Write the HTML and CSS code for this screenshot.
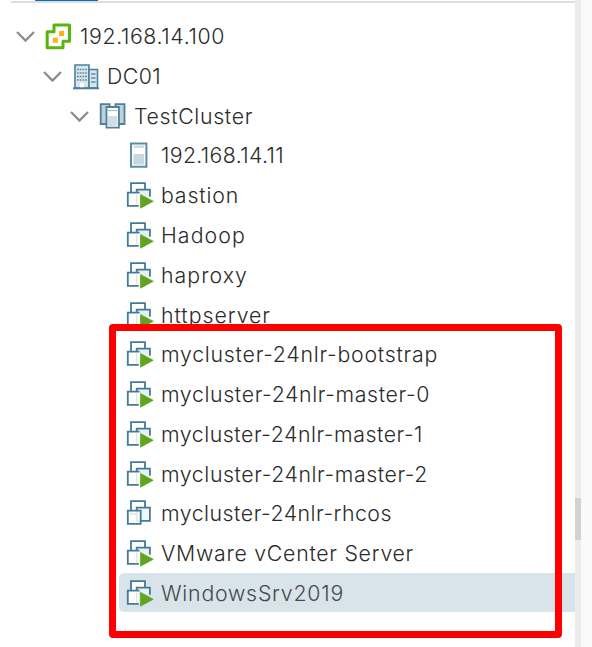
FILE: index.html
```html
<!DOCTYPE html>
<html lang="en">
<head>
<meta charset="utf-8">
<title>Inventory</title>
<link rel="stylesheet" href="styles.css">
</head>
<body>
<svg class="defs" aria-hidden="true">
  <symbol id="chevron" viewBox="0 0 20 28"><path d="M2 10 10.5 18.5 19 10" fill="none" stroke="#8d8d8d" stroke-width="2.3"/></symbol>
  <symbol id="vcenter" viewBox="0 0 28 28">
    <path d="M9 3H24.5V19.2H18V25.8H2.2V9.7H9Z" fill="#fff" stroke="#59b50d" stroke-width="3" stroke-linejoin="round"/>
    <path d="M14 9h5v5h-5zM7.8 15.7h5v5h-5z" fill="#ffb312"/>
  </symbol>
  <symbol id="datacenter" viewBox="0 0 28 28">
    <path d="M3 3h14v23H3z" fill="#d9e5ec" stroke="#4e8199" stroke-width="1.6"/>
    <path d="M17 7.5h8.5V26H17z" fill="#d9e5ec" stroke="#4e8199" stroke-width="1.6"/>
    <path d="M5 7.5h10M5 11h10M5 14.5h10M5 18h10" stroke="#608fa5" stroke-width="1.4" stroke-dasharray="1.8 .9"/>
    <path d="M19 12h4.5M19 16h4.5M19 20h4.5" stroke="#608fa5" stroke-width="1.5"/>
    <path d="M8 21h4v5H8z" fill="#fff"/>
    <path d="M1 26.3h26" stroke="#4e8199" stroke-width="2"/>
  </symbol>
  <symbol id="cluster" viewBox="0 0 28 28">
    <path d="M1.7 2.2h9V22h-9zM16.5 2.2h9V22h-9z" fill="#bfd1da" stroke="#4e8199" stroke-width="1.8"/>
    <path d="M7.5 5h12.4v20.7H7.5z" fill="#fff" stroke="#4e8199" stroke-width="1.8"/>
    <path d="M9 8.5h9.4" stroke="#a9c3d0" stroke-width="1.4"/>
    <path d="M9 14h9.4v10.3H9z" fill="#d0dfe6"/>
  </symbol>
  <symbol id="host" viewBox="0 0 28 28">
    <path d="M5 2.4h15.4v23.3H5z" fill="#fff" stroke="#5d8da3" stroke-width="2"/>
    <path d="M7.4 4.6h10.7v2.2H7.4zM7.4 12.9h10.7v10.6H7.4z" fill="#c6d8e0"/>
  </symbol>
  <symbol id="boxes" viewBox="0 0 28 28">
    <path d="M5 2.2h14v13H5z" fill="#fff" stroke="#427b96" stroke-width="1.8"/>
    <path d="M10.7 8.7h13.2v13.2H10.7z" fill="#f1f6f8" stroke="#427b96" stroke-width="1.8"/>
    <path d="M1.8 11.6h12.9v13.2H1.8z" fill="#fff" fill-opacity=".85" stroke="#427b96" stroke-width="1.8"/>
  </symbol>
  <symbol id="running" viewBox="0 0 28 28">
    <path d="M5 12V2.2h14V9" fill="#fff" stroke="#427b96" stroke-width="1.8"/>
    <path d="M10.7 12V8.7h13.2v7" fill="#e9f1f5" stroke="#427b96" stroke-width="1.8"/>
    <path d="M1.8 11.6h11v13.2h-11z" fill="#fff"/>
    <path d="M13.5 11.6H1.8v13.2h11" fill="none" stroke="#427b96" stroke-width="1.8"/>
    <path d="M10.7 13.5v10" stroke="#dbe6ec" stroke-width="1.4"/>
    <path d="M14.5 13.4 27.3 20.3 14.5 27.2Z" fill="#5fa51f" stroke="#5fa51f" stroke-width=".7"/>
  </symbol>
</svg>
<div class="window">
  <main class="panel">
    <div class="tabs"><span class="tab-active"></span></div>
    <ul class="tree" id="tree"></ul>
    <div class="marker"></div>
  </main>
  <div class="scrollbar"><span class="thumb"></span></div>
  <div class="gutter"></div>
</div>
<script src="tree.js"></script>
</body>
</html>
```
FILE: styles.css
```css
* { box-sizing: border-box; }
body { margin: 0; background: #fff; font-family: Inter, "Open Sans", "Liberation Sans", sans-serif; }
.defs { display: block; width: 0; height: 0; }
.window { display: flex; width: 592px; height: 647px; overflow: hidden; }
.panel { position: relative; width: 575px; }
.tabs { height: 3px; margin-left: 11px; border-bottom: 2px solid #dedede; padding-left: 24px; }
.tab-active { display: block; width: 63px; height: 1px; background: #0072b5; }
.tree { list-style: none; margin: 0; padding: 13.3px 0 0; }
.row { display: flex; align-items: center; height: 39.78px; padding-left: 6.5px; }
.level-0 { margin-left: 8px; }
.level-1 { margin-left: 35px; }
.level-2 { margin-left: 62px; }
.level-3 { margin-left: 119px; }
.chevron { width: 20px; height: 28px; margin-right: 10px; }
.icon { width: 28px; height: 28px; flex: none; margin-right: 7.5px; }
.label { font-size: 21.3px; font-weight: 300; line-height: 30px; color: #2b2b2b; white-space: nowrap; }
.selected { height: 39px; background: #d9e4ea; border-radius: 5px 0 0 5px; }
.selected .label { color: #45494b; }
.marker { position: absolute; left: 108.7px; top: 324px; width: 453px; height: 314px; border: 7.5px solid #f00; border-radius: 4px; }
.scrollbar { width: 6px; background: #ececec; padding-top: 498px; }
.thumb { display: block; height: 42px; background: #d2d2d2; }
.gutter { flex: 1; background: #fafafa; }
```
FILE: tree.js
```js
// level, icon, name, label width
const nodes = [
  [0, "vcenter", "192.168.14.100", 145],
  [1, "datacenter", "DC01", 54],
  [2, "cluster", "TestCluster", 119],
  [3, "host", "192.168.14.11", 123],
  [3, "running", "bastion", 78],
  [3, "running", "Hadoop", 85],
  [3, "running", "haproxy", 87],
  [3, "running", "httpserver", 110],
  [3, "running", "mycluster-24nlr-bootstrap", 277],
  [3, "running", "mycluster-24nlr-master-0", 269],
  [3, "running", "mycluster-24nlr-master-1", 262],
  [3, "running", "mycluster-24nlr-master-2", 267],
  [3, "boxes", "mycluster-24nlr-rhcos", 231],
  [3, "running", "VMware vCenter Server", 253],
  [3, "running", "WindowsSrv2019", 183]
];
const tree = document.getElementById("tree");
nodes.forEach(([level, icon, name, width], i) => {
  const row = document.createElement("li");
  row.className = "row level-" + level + (i === nodes.length - 1 ? " selected" : "");
  const chevron = level < 3 ? '<svg class="chevron"><use href="#chevron"/></svg>' : "";
  row.innerHTML = chevron + '<svg class="icon"><use href="#' + icon + '"/></svg><span class="label">' + name + "</span>";
  tree.append(row);
  // spread the letters over the label's width
  const label = row.querySelector(".label");
  label.style.letterSpacing = (width - label.getBoundingClientRect().width) / name.length + "px";
});
```
